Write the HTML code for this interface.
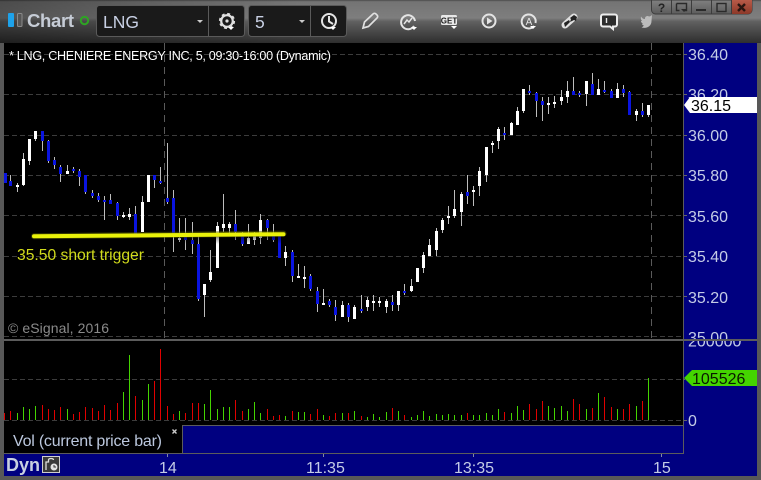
<!DOCTYPE html>
<html><head><meta charset="utf-8"><title>LNG Chart</title>
<style>
html,body{margin:0;padding:0;background:#555;width:761px;height:480px;overflow:hidden}
svg{display:block}
text{font-family:"Liberation Sans",sans-serif}
.ax{font-size:16px;fill:#c4cce6}
.grid{stroke:#3c3c3c;stroke-width:1;stroke-dasharray:5 3;fill:none}
.v{stroke:#5a5a5a;stroke-width:1;stroke-dasharray:7 5;fill:none}
.ic{fill:none;stroke:#e4e4e4;stroke-width:2}
.wb{font-size:12px;font-weight:bold;fill:#222;text-anchor:middle}
</style></head><body>
<svg width="761" height="480" viewBox="0 0 761 480" xmlns="http://www.w3.org/2000/svg">
<defs>
<linearGradient id="tb" x1="0" y1="0" x2="0" y2="1">
<stop offset="0" stop-color="#4a4a4a"/><stop offset=".04" stop-color="#747474"/><stop offset=".42" stop-color="#7e7e7e"/><stop offset=".5" stop-color="#606060"/><stop offset="1" stop-color="#2e2e2e"/>
</linearGradient>
<linearGradient id="tl" x1="0" y1="0" x2="1" y2="0">
<stop offset="0" stop-color="#000" stop-opacity=".35"/><stop offset="1" stop-color="#000" stop-opacity="0"/>
</linearGradient>
<linearGradient id="sh" x1="0" y1="0" x2="0" y2="1">
<stop offset="0" stop-color="#000" stop-opacity=".5"/><stop offset="1" stop-color="#000" stop-opacity="0"/>
</linearGradient>
<linearGradient id="wbg" x1="0" y1="0" x2="0" y2="1">
<stop offset="0" stop-color="#808080"/><stop offset="1" stop-color="#5c5c5c"/>
</linearGradient>
<linearGradient id="wx" x1="0" y1="0" x2="0" y2="1">
<stop offset="0" stop-color="#b85a48"/><stop offset="1" stop-color="#8c3828"/>
</linearGradient>
</defs>

<rect width="761" height="480" fill="#585858"/>
<rect width="761" height="43" fill="url(#tb)"/>
<rect width="300" height="43" fill="url(#tl)"/>

<!-- navy axes -->
<rect x="4" y="43" width="753" height="433" fill="#000080"/>
<!-- black panes -->
<rect x="4" y="43" width="679" height="296" fill="#000"/>
<rect x="4" y="339" width="679" height="86" fill="#000"/>
<rect x="4" y="425" width="178" height="28" fill="#000"/>

<!-- gridlines -->
<path class="grid" d="M4 54.5H683M4 94.5H683M4 135.5H683M4 175.5H683M4 215.5H683M4 256.5H683M4 296.5H683M4 336.5H683M4 379.5H683M4 420.5H683"/>
<path class="v" d="M164.5 43V338M651.5 43V338"/>
<path d="M683 94.5h4M683 135.5h4M683 175.5h4M683 215.5h4M683 256.5h4M683 296.5h4M683 54.5h4M683 379.5h2M683 420.5h4" stroke="#666" fill="none"/>

<!-- candle wicks -->
<g shape-rendering="crispEdges" fill="none">
<path stroke="#bdbdbd" stroke-width="1" d="M10.5 175V186M17.5 183V192M23.5 153V186M29.5 139V165M35.5 131V141M42.5 131V151M48.5 140V163M54.5 157V169M60.5 165V182M67.5 165V174M73.5 167V173M79.5 169V186M85.5 175V194M92.5 190V198M98.5 193V202M104.5 196V220M110.5 194V204M117.5 202V220M123.5 212V218M129.5 208V220M135.5 206V235M142.5 196V232M154.5 175V188M160.5 167V184M167.5 143V204M173.5 190V252M179.5 218V242M185.5 218V250M192.5 222V254M198.5 236V301M204.5 284V317M210.5 250V282M217.5 222V268M223.5 194V232M229.5 222V233M235.5 210V240M242.5 232V246M248.5 224V244M254.5 232V245M260.5 214V244M267.5 219V240M273.5 224V242M285.5 246V266M292.5 250V282M298.5 264V278M304.5 266V288M310.5 274V291M317.5 287V312M323.5 289V305M329.5 299V307M335.5 300V321M342.5 301V317M348.5 303V322M354.5 305V319M361.5 295V313M367.5 297V311M373.5 295V311M379.5 297V307M386.5 299V313M392.5 295V311M398.5 291V311M404.5 284V295M411.5 279V292M423.5 252V273M429.5 239V256M436.5 228V256M442.5 218V233M448.5 206V224M454.5 190V218M461.5 192V226M467.5 175V204M473.5 186V206M479.5 167V196M486.5 147V182M492.5 141V153M498.5 127V149M504.5 127V140M511.5 122V135M517.5 107V125M523.5 89V113M529.5 85V95M536.5 92V117M542.5 97V121M548.5 97V114M554.5 96V108M561.5 90V105M567.5 81V103M573.5 77V95M579.5 91V97M586.5 81V106M592.5 73V95M598.5 79V95M604.5 81V93M611.5 89V98M617.5 83V98M623.5 85V97M629.5 91V115M636.5 109V121M642.5 103V117M648.5 105V117"/>
<path stroke="#fff" stroke-width="3" d="M17.5 185V187M23.5 159V185M29.5 139V161M35.5 131V139M67.5 171V174M123.5 215V217M129.5 214V217M142.5 202V232M148.5 175V202M179.5 238V240M204.5 284V295M210.5 272V280M217.5 226V268M223.5 224V228M229.5 224V228M248.5 238V244M254.5 236V240M260.5 220V238M285.5 252V258M298.5 276V278M304.5 277V279M323.5 303V305M342.5 305V317M354.5 307V319M367.5 300V307M373.5 301V303M379.5 301V303M386.5 301V307M398.5 291V305M411.5 286V291M417.5 268V282M423.5 255V268M429.5 245V256M436.5 231V250M442.5 220V230M448.5 216V218M454.5 209V216M461.5 194V212M473.5 190V192M479.5 171V186M486.5 147V175M492.5 143V145M498.5 129V141M511.5 123V135M517.5 111V125M523.5 89V111M548.5 103V105M554.5 102V104M561.5 97V101M567.5 91V97M586.5 81V94M598.5 89V95M617.5 89V98M636.5 111V115M648.5 105V115"/>
<path stroke="#0a14e0" stroke-width="3" d="M5.5 173V183M10.5 181V186M42.5 131V141M48.5 141V161M54.5 160V165M60.5 167V174M73.5 169V171M79.5 171V177M85.5 175V192M92.5 193V196M98.5 196V200M104.5 200V202M110.5 200V204M117.5 203V216M135.5 214V235M154.5 175V180M160.5 181V183M167.5 198V202M173.5 198V237M185.5 237V240M192.5 240V244M198.5 244V299M235.5 224V232M242.5 235V244M267.5 220V228M273.5 236V240M279.5 236V258M292.5 252V276M310.5 276V289M317.5 291V304M329.5 301V305M335.5 307V315M348.5 305V317M361.5 309V311M392.5 302V305M404.5 291V293M467.5 192V196M504.5 133V135M529.5 91V93M536.5 93V101M542.5 101V105M573.5 91V95M579.5 93V95M592.5 84V95M604.5 90V92M611.5 91V98M623.5 89V93M629.5 92V115M642.5 111V115"/>
</g>

<!-- trigger line -->
<rect x="176" y="236" width="108" height="8" fill="url(#sh)"/>
<path d="M34 236.200L283.500 233.600" stroke="#5a5e00" stroke-width="6" stroke-linecap="round" opacity=".55" fill="none"/>
<path d="M34 236.200L283.500 234.200" stroke="#eaf20a" stroke-width="4" stroke-linecap="round" fill="none"/>

<!-- volume -->
<g shape-rendering="crispEdges" fill="none" stroke-width="1">
<path stroke="#e00000" d="M4.500 420v-7M10.500 420v-9M42.500 420v-15M48.500 420v-11M54.500 420v-10M60.500 420v-13M73.500 420v-6M79.500 420v-8M85.500 420v-13M92.500 420v-12M98.500 420v-9M104.500 420v-15M110.500 420v-10M117.500 420v-17M135.500 420v-24M154.500 420v-39M160.500 420v-71M167.500 420v-14M173.500 420v-6M185.500 420v-7M192.500 420v-17M198.500 420v-17M235.500 420v-20M242.500 420v-9M267.500 420v-11M273.500 420v-4M279.500 420v-5M292.500 420v-9M310.500 420v-6M317.500 420v-11M329.500 420v-4M335.500 420v-7M348.500 420v-7M361.500 420v-4M392.500 420v-12M404.500 420v-5M467.500 420v-7M504.500 420v-8M529.500 420v-16M536.500 420v-11M542.500 420v-19M573.500 420v-21M579.500 420v-16M592.500 420v-12M604.500 420v-23M611.500 420v-13M623.500 420v-11M629.500 420v-16M642.500 420v-19"/>
<path stroke="#44d400" d="M17.500 420v-7M23.500 420v-13M29.500 420v-11M35.500 420v-14M67.500 420v-11M123.500 420v-28M129.500 420v-65M142.500 420v-20M148.500 420v-36M179.500 420v-9M204.500 420v-16M210.500 420v-30M217.500 420v-11M223.500 420v-13M229.500 420v-13M248.500 420v-11M254.500 420v-18M260.500 420v-7M285.500 420v-4M298.500 420v-8M304.500 420v-8M323.500 420v-5M342.500 420v-7M354.500 420v-9M367.500 420v-3M373.500 420v-6M379.500 420v-3M386.500 420v-8M398.500 420v-9M411.500 420v-3M417.500 420v-5M423.500 420v-9M429.500 420v-4M436.500 420v-6M442.500 420v-5M448.500 420v-6M454.500 420v-5M461.500 420v-5M473.500 420v-5M479.500 420v-5M486.500 420v-7M492.500 420v-5M498.500 420v-11M511.500 420v-7M517.500 420v-14M523.500 420v-10M548.500 420v-14M554.500 420v-12M561.500 420v-14M567.500 420v-9M586.500 420v-11M598.500 420v-27M617.500 420v-11M636.500 420v-14M648.500 420v-42"/>
</g>

<!-- chart texts -->
<text x="9" y="60" font-size="12.600" fill="#fff" textLength="322">* LNG, CHENIERE ENERGY INC, 5, 09:30-16:00 (Dynamic)</text>
<text x="17" y="260" font-size="15.700" fill="#d2dc1c" textLength="127">35.50 short trigger</text>
<text x="8" y="333" font-size="14" fill="#8a8a8a" textLength="101">© eSignal, 2016</text>

<!-- axis -->
<svg x="684" y="43" width="73" height="296">
<text class="ax" x="4" y="17">36.40</text>
<text class="ax" x="4" y="57">36.20</text>
<text class="ax" x="4" y="98">36.00</text>
<text class="ax" x="4" y="138">35.80</text>
<text class="ax" x="4" y="179">35.60</text>
<text class="ax" x="4" y="219">35.40</text>
<text class="ax" x="4" y="260">35.20</text>
<text class="ax" x="4" y="300">35.00</text>
</svg>
<svg x="684" y="341" width="73" height="20">
<text class="ax" x="4" y="5.500">200000</text>
</svg>
<text class="ax" x="688" y="426">0</text>

<polygon points="684,105 690,97 757,97 757,113 690,113" fill="#fff"/>
<text x="691" y="111" font-size="16" fill="#000">36.15</text>
<polygon points="684,378 692,370 757,370 757,386 692,386" fill="#44d400"/>
<text x="692" y="384" font-size="16" fill="#0a1a00">105526</text>

<!-- panel lines -->
<rect x="4" y="339" width="753" height="2" fill="#5c5c5c"/>
<rect x="182" y="425" width="501" height="1" fill="#5c5c5c"/>
<rect x="182" y="425" width="1" height="28" fill="#5c5c5c"/>
<rect x="683" y="43" width="1" height="411" fill="#5c5c5c"/>
<rect x="4" y="453" width="680" height="1" fill="#5c5c5c"/>
<path d="M167.500 454v3M323.500 454v3M473.500 454v3M661.500 454v3" stroke="#8088a8" fill="none"/>

<!-- vol label -->
<text x="13" y="446" font-size="16" fill="#bcc8de" textLength="149">Vol (current price bar)</text>
<path d="M172.500 429.500l4 4m0-4l-4 4" stroke="#ccc" stroke-width="1.400" fill="none"/>

<!-- bottom -->
<text x="6" y="471" font-size="18" font-weight="bold" fill="#c8d0e0">Dyn</text>
<rect x="42.500" y="456.500" width="17" height="16" fill="#3a3a3a" stroke="#cfcfcf"/>
<path d="M46 470v-8h2.500v-2c0-2 5-2 5 0" fill="none" stroke="#ddd" stroke-width="1.300"/>
<circle cx="54" cy="467" r="3.500" fill="#e4e4e4"/><path d="M54 465v2h2" stroke="#333" fill="none"/>
<text class="ax" x="159" y="473">14</text>
<text class="ax" x="306" y="473">11:35</text>
<text class="ax" x="454" y="473">13:35</text>
<text class="ax" x="653" y="473">15</text>

<!-- toolbar left -->
<rect x="8" y="13" width="6" height="14" rx="1" fill="#1ea2ea"/>
<rect x="17.500" y="13.500" width="4.500" height="13" rx="1" fill="#555" stroke="#8a8a8a"/>
<text x="27" y="27" font-size="18.500" font-weight="bold" fill="#c6ccd6" textLength="47">Chart</text>
<circle cx="84.500" cy="20.500" r="3.700" fill="none" stroke="#2ea424" stroke-width="2"/>

<!-- combos -->
<rect x="96.500" y="5.500" width="148" height="31" rx="3" fill="#1a1a1a" stroke="#5a5a5a"/>
<path d="M208.500 6V36" stroke="#5a5a5a"/>
<text x="103" y="28" font-size="17.500" fill="#c8d0e4">LNG</text>
<polygon points="197,20 203,20 200,23" fill="#ccc"/>
<rect x="248.500" y="5.500" width="98" height="31" rx="3" fill="#1a1a1a" stroke="#5a5a5a"/>
<path d="M310.500 6V36" stroke="#5a5a5a"/>
<text x="255" y="28" font-size="17.500" fill="#c8d0e4">5</text>
<polygon points="299,20 305,20 302,23" fill="#ccc"/>

<!-- gear -->
<circle cx="227" cy="21" r="5.800" fill="none" stroke="#e0e0e0" stroke-width="2.200"/>
<circle cx="227" cy="21" r="7.300" fill="none" stroke="#e0e0e0" stroke-width="1.600" stroke-dasharray="3 2.730"/>
<circle cx="227" cy="21" r="1.600" fill="#e0e0e0"/>
<polygon points="228,27 234,27 231,30" fill="#fff"/>
<!-- clock -->
<circle cx="329" cy="21" r="7" class="ic" stroke-width="2.200"/>
<path d="M329 16V21.500L333 24" class="ic" stroke-width="1.600"/>
<polygon points="330,27 336,27 333,30" fill="#fff"/>
<!-- pencil -->
<path d="M363 28l1.500-6L373 14a2 2 0 0 1 3 0l1 1a2 2 0 0 1 0 3l-8.500 8.500z" fill="none" stroke="#e0e0e0" stroke-width="1.700"/>
<!-- chart refresh -->
<path d="M414 26a7 7 0 1 1 1-5" class="ic"/>
<path d="M404 24l3-4 2 2 3-4" fill="none" stroke="#e4e4e4" stroke-width="1.500"/>
<polygon points="411,27 417,27 414,30" fill="#fff"/>
<!-- GET -->
<rect x="441" y="15" width="16" height="10" rx="1.500" fill="#e8e8e8"/>
<text x="449" y="23.500" font-size="8" font-weight="bold" fill="#222" text-anchor="middle">GET</text>
<polygon points="451,26 457,26 454,29" fill="#fff"/>
<!-- play -->
<circle cx="489" cy="21" r="6.500" class="ic"/>
<polygon points="487,17.500 487,24.500 492.500,21" fill="#e4e4e4"/>
<!-- A -->
<path d="M534 26a7 7 0 1 1 1.500-3" class="ic"/>
<text x="529" y="25" font-size="10" fill="#e8e8e8" text-anchor="middle">A</text>
<polygon points="530,26 536,26 533,29" fill="#fff"/>
<!-- diamond arrows -->
<path d="M565 25L574 17" stroke="#e0e0e0" stroke-width="7" stroke-linecap="round" fill="none"/>
<path d="M565 27l5-5-1-2-5 3zM574 15l-4 3 1 1-1 3 4-2 2 1 1-4z" fill="#222"/>
<!-- speech -->
<path d="M603 14.500h12a2 2 0 0 1 2 2v8a2 2 0 0 1-2 2h-2v2.500l-3-2.500h-7a2 2 0 0 1-2-2v-8a2 2 0 0 1 2-2z" fill="#2c2c2c" stroke="#ececec" stroke-width="2"/>
<path d="M606.500 18v5" stroke="#ececec" stroke-width="1.400"/>
<!-- twitter -->
<path d="M652 15c-1 1-2 1.500-3 1.500-2-1.500-4.500.5-4 2.500-2 0-3-1-4-2.500-.5 2 0 3.500 1 4.500h-1c0 1 1 2.500 2 2.500l-1 .5c.5 1 1 1.500 2 1.500-1 1-1.500 1.500-2.500 2 5.500 1.500 10-1.500 10-6.500z" fill="#bcbcbc"/>

<!-- window buttons -->
<path d="M651.500 0V10a4 4 0 0 0 4 4H748a4 4 0 0 0 4-4V0z" fill="url(#wbg)" stroke="#3c3c3c"/>
<path d="M732 0H752V10a4 4 0 0 1-4 4H732z" fill="url(#wx)"/>
<path d="M671.500 0v14M691.500 0v14M711.500 0v14M731.500 0v14" stroke="#3c3c3c"/>
<text class="wb" x="661.500" y="12">?</text>
<path d="M676.500 3.500h10v7h-3M676.500 3.500v7h3" fill="none" stroke="#2a2a2a" stroke-width="1.400"/>
<polygon points="681,9 687,9 684,12" fill="#2a2a2a"/>
<rect x="696" y="9" width="10" height="2" fill="#2a2a2a"/>
<rect x="717" y="3.500" width="9" height="8" fill="none" stroke="#2a2a2a" stroke-width="1.400"/>
<path d="M738 4l7 7m0-7l-7 7" stroke="#2a1510" stroke-width="2.400" fill="none"/>
</svg>
</body></html>
